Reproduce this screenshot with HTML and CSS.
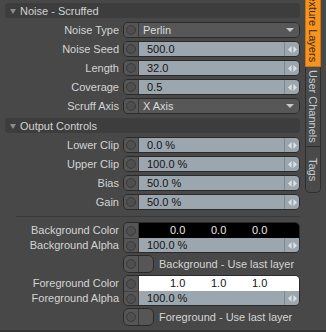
FILE: index.html
```html
<!DOCTYPE html>
<html lang="en">
<head>
    <meta charset="UTF-8">
    <title>Noise - Scruffed</title>
    <link rel="stylesheet" href="styles.css">
</head>
<body>
<div class="window">
    <div class="panel">
        <div class="section-head"><span class="caret"></span>Noise - Scruffed</div>
        <div class="row">
            <div class="label">Noise Type</div>
            <div class="ctrl"><span class="dot"><i></i></span><div class="field drop">Perlin<span class="arrow"></span></div></div>
        </div>
        <div class="row">
            <div class="label">Noise Seed</div>
            <div class="ctrl"><span class="dot"><i></i></span><div class="field num">500.0</div><span class="handle"><svg width="9" height="9" viewBox="0 0 9 9"><path d="M0 4.5L3.6 1v7zM9 4.5L5.4 1v7z" fill="#dce1e5"/></svg></span></div>
        </div>
        <div class="row">
            <div class="label">Length</div>
            <div class="ctrl"><span class="dot"><i></i></span><div class="field num">32.0</div><span class="handle"><svg width="9" height="9" viewBox="0 0 9 9"><path d="M0 4.5L3.6 1v7zM9 4.5L5.4 1v7z" fill="#dce1e5"/></svg></span></div>
        </div>
        <div class="row">
            <div class="label">Coverage</div>
            <div class="ctrl"><span class="dot"><i></i></span><div class="field num">0.5</div><span class="handle"><svg width="9" height="9" viewBox="0 0 9 9"><path d="M0 4.5L3.6 1v7zM9 4.5L5.4 1v7z" fill="#dce1e5"/></svg></span></div>
        </div>
        <div class="row">
            <div class="label">Scruff Axis</div>
            <div class="ctrl"><span class="dot"><i></i></span><div class="field drop">X Axis<span class="arrow"></span></div></div>
        </div>

        <div class="section-head"><span class="caret"></span>Output Controls</div>
        <div class="row">
            <div class="label">Lower Clip</div>
            <div class="ctrl"><span class="dot"><i></i></span><div class="field num">0.0 %</div><span class="handle"><svg width="9" height="9" viewBox="0 0 9 9"><path d="M0 4.5L3.6 1v7zM9 4.5L5.4 1v7z" fill="#dce1e5"/></svg></span></div>
        </div>
        <div class="row">
            <div class="label">Upper Clip</div>
            <div class="ctrl"><span class="dot"><i></i></span><div class="field num">100.0 %</div><span class="handle"><svg width="9" height="9" viewBox="0 0 9 9"><path d="M0 4.5L3.6 1v7zM9 4.5L5.4 1v7z" fill="#dce1e5"/></svg></span></div>
        </div>
        <div class="row">
            <div class="label">Bias</div>
            <div class="ctrl"><span class="dot"><i></i></span><div class="field num">50.0 %</div><span class="handle"><svg width="9" height="9" viewBox="0 0 9 9"><path d="M0 4.5L3.6 1v7zM9 4.5L5.4 1v7z" fill="#dce1e5"/></svg></span></div>
        </div>
        <div class="row">
            <div class="label">Gain</div>
            <div class="ctrl"><span class="dot"><i></i></span><div class="field num">50.0 %</div><span class="handle"><svg width="9" height="9" viewBox="0 0 9 9"><path d="M0 4.5L3.6 1v7zM9 4.5L5.4 1v7z" fill="#dce1e5"/></svg></span></div>
        </div>

        <div class="sep"></div>

        <div class="row pair">
            <div class="labels"><div>Background Color</div><div>Background Alpha</div></div>
            <div class="ctrl stack">
                <div class="sub"><span class="dot"><i></i></span><div class="swatch black"><span>0.0</span><span>0.0</span><span>0.0</span></div></div>
                <div class="sub"><span class="dot"><i></i></span><div class="field num">100.0 %</div><span class="handle"><svg width="9" height="9" viewBox="0 0 9 9"><path d="M0 4.5L3.6 1v7zM9 4.5L5.4 1v7z" fill="#dce1e5"/></svg></span></div>
            </div>
        </div>
        <div class="row check">
            <div class="label"></div>
            <div class="toggle"><span class="dot"><i></i></span><span class="knob"></span></div>
            <span class="check-text">Background - Use last layer</span>
        </div>

        <div class="row pair">
            <div class="labels"><div>Foreground Color</div><div>Foreground Alpha</div></div>
            <div class="ctrl stack">
                <div class="sub"><span class="dot"><i></i></span><div class="swatch white"><span>1.0</span><span>1.0</span><span>1.0</span></div></div>
                <div class="sub"><span class="dot"><i></i></span><div class="field num">100.0 %</div><span class="handle"><svg width="9" height="9" viewBox="0 0 9 9"><path d="M0 4.5L3.6 1v7zM9 4.5L5.4 1v7z" fill="#dce1e5"/></svg></span></div>
            </div>
        </div>
        <div class="row check">
            <div class="label"></div>
            <div class="toggle"><span class="dot"><i></i></span><span class="knob"></span></div>
            <span class="check-text">Foreground - Use last layer</span>
        </div>
    </div>

    <div class="tabs">
        <div class="tab active">Texture Layers</div>
        <div class="tab">User Channels</div>
        <div class="tab last">Tags</div>
    </div>
</div>
</body>
</html>
```

FILE: styles.css
```css
body { margin: 0; background: #484848; font-family: "Liberation Sans", Arial, sans-serif; font-size: 11px; color: #d4d4d4; }
.window { display: flex; height: 330px; border-bottom: 2px solid #363636; overflow: hidden; }
.panel { width: 304px; padding-top: 3px; }

/* section headers */
.section-head { display: flex; align-items: center; margin-left: 5px; width: 295px; height: 15px; background: #3d3d3d; border-radius: 4px; color: #d2d2d2; }
.caret { width: 0; height: 0; margin: 1px 4px 0 5px; border-left: 3px solid transparent; border-right: 3px solid transparent; border-top: 5px solid #8c8c8c; }
.row + .section-head { margin-top: 4px; }

/* rows */
.row { display: flex; height: 16px; margin-top: 3px; }
.section-head + .row { margin-top: 4px; }
.label { width: 123px; flex: none; padding-right: 4px; box-sizing: border-box; text-align: right; line-height: 16px; white-space: nowrap; }
.ctrl { display: flex; width: 177px; height: 16px; box-sizing: border-box; border: 1px solid #2a2a2a; border-radius: 5px; overflow: hidden; }
.dot { display: flex; align-items: center; justify-content: center; width: 14px; flex: none; background: #565656; border-right: 1px solid #393939; }
.dot i { width: 8px; height: 8px; border: 1px solid #3b3b3b; border-radius: 50%; background: #4f4f4f; }
.field { flex: 1; line-height: 14px; white-space: nowrap; }
.num { background: #9ca6ae; color: #141414; padding-left: 8px; }
.drop { display: flex; justify-content: space-between; align-items: center; background: #575757; color: #dcdcdc; padding-left: 4px; padding-right: 5px; }
.arrow { width: 0; height: 0; border-left: 4px solid transparent; border-right: 4px solid transparent; border-top: 4px solid #c8c8c8; }
.handle { display: flex; align-items: center; justify-content: center; width: 14px; flex: none; background: #9ca6ae; border-left: 1px solid #7f8990; }

.sep { margin: 6px 4px 0 16px; border-top: 1px solid #393939; }

/* colour + alpha pairs */
.pair { height: 31px; margin-top: 5px; }
.labels { width: 123px; flex: none; padding: 1px 4px 0 0; box-sizing: border-box; text-align: right; line-height: 15px; }
.stack { flex-direction: column; height: 31px; }
.sub { display: flex; height: 15px; }
.sub + .sub .dot { border-top: 1px solid #3f3f3f; }
.swatch { flex: 1; display: grid; grid-template-columns: 41px 41px 41px; padding-left: 31px; line-height: 15px; }
.black { background: #000; color: #e8e8e8; }
.white { background: #fff; color: #141414; }

/* toggles */
.check { height: 18px; margin-top: 2px; }
.pair + .check { margin-top: 2px; }
.check + .pair { margin-top: 2px; }
.toggle { display: flex; width: 31px; height: 18px; box-sizing: border-box; border: 1px solid #2a2a2a; border-radius: 6px; overflow: hidden; }
.knob { flex: 1; background: #565656; }
.check-text { margin-left: 5px; line-height: 18px; white-space: nowrap; }

/* side tabs */
.tabs { width: 22px; flex: none; display: flex; flex-direction: column; padding-left: 1px; box-sizing: border-box; }
.tab { writing-mode: vertical-rl; width: 16px; box-sizing: border-box; text-align: center; line-height: 14px; background: #4a4a4a; color: #c4ccd3; border: 1px solid #2f2f2f; border-top: none; white-space: nowrap; }
.tab.active { height: 81px; margin-top: -14px; background: #f7941d; color: #3a2810; border-color: #c87612; }
.tab:nth-child(2) { height: 80px; }
.tab.last { height: 46px; border-radius: 0 0 5px 5px; }
```
